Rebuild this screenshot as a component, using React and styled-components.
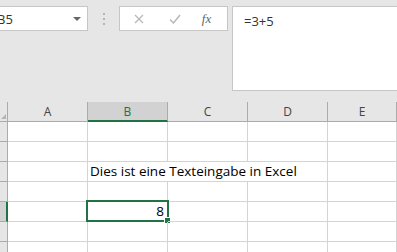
import React from "react";
import styled, { createGlobalStyle } from "styled-components";

const Global = createGlobalStyle`
  html, body { margin: 0; padding: 0; background: #e6e6e6; overflow: hidden; }
  body { width: 397px; height: 252px; }
`;

const Page = styled.div`
  width: 397px;
  height: 252px;
  overflow: hidden;
  background: #e6e6e6;
  font-family: "Open Sans", "Noto Sans", sans-serif;
`;

const FormulaBar = styled.div`
  display: flex;
  align-items: flex-start;
  height: 102px;
  padding-top: 6px;
  box-sizing: border-box;
`;

const NameBox = styled.div`
  flex: none;
  margin-left: -12px;
  width: 100px;
  height: 25px;
  box-sizing: border-box;
  background: #fff;
  border: 1px solid #c6c6c6;
  display: flex;
  align-items: center;
  justify-content: space-between;
  padding: 0 6px 0 8px;
  font-size: 13px;
  color: #333;
`;

const Arrow = styled.span`
  width: 0;
  height: 0;
  border-left: 4px solid transparent;
  border-right: 4px solid transparent;
  border-top: 4px solid #666;
  margin-top: 1px;
`;

const Grip = styled.div`
  flex: none;
  width: 31px;
  height: 25px;
  display: flex;
  flex-direction: column;
  align-items: center;
  justify-content: center;
  gap: 3px;
`;

const Dot = styled.span`
  width: 2px;
  height: 2px;
  background: #b4b4b4;
`;

const FxButtons = styled.div`
  flex: none;
  width: 109px;
  height: 25px;
  box-sizing: border-box;
  background: #fff;
  border: 1px solid #c6c6c6;
  display: grid;
  grid-template-columns: 37px 35px 1fr;
  align-items: center;
  justify-items: center;
`;

const Fx = styled.span`
  font-family: "Liberation Serif", serif;
  font-style: italic;
  font-size: 13px;
  color: #666;
  padding-right: 6px;
`;

const FormulaInput = styled.div`
  flex: 1;
  margin-left: 4px;
  margin-right: -4px;
  height: 85px;
  box-sizing: border-box;
  background: #fff;
  border: 1px solid #c6c6c6;
  padding: 5px 0 0 11px;
  font-size: 13px;
  color: #333;
`;

const Sheet = styled.div`
  display: grid;
  grid-template-columns: 8px 80px 80px 80px 80px 1fr;
  grid-auto-rows: 20px;
  background: #fff;
`;

const ColHead = styled.div`
  box-sizing: border-box;
  background: ${(p) => (p.$active ? "#d2d2d2" : "#e6e6e6")};
  border-right: 1px solid #ababab;
  border-bottom: ${(p) => (p.$active ? "2px solid #217346" : "1px solid #ababab")};
  display: flex;
  align-items: center;
  justify-content: center;
  font-size: 12px;
  color: ${(p) => (p.$active ? "#217346" : "#444")};
  padding-top: ${(p) => (p.$active ? "1px" : "0")};
`;

const Corner = styled.div`
  box-sizing: border-box;
  background: #e6e6e6;
  border-right: 1px solid #ababab;
  border-bottom: 1px solid #ababab;
  display: flex;
  align-items: flex-end;
  justify-content: flex-end;
  padding: 0 1px 2px 0;
`;

const CornerTri = styled.span`
  width: 0;
  height: 0;
  border-left: 5px solid transparent;
  border-bottom: 5px solid #b5b5b5;
`;

const RowHead = styled.div`
  box-sizing: border-box;
  background: ${(p) => (p.$active ? "#d2d2d2" : "#e6e6e6")};
  border-right: ${(p) => (p.$active ? "2px solid #217346" : "1px solid #ababab")};
  border-bottom: 1px solid #ababab;
`;

const Cell = styled.div`
  position: relative;
  box-sizing: border-box;
  border-right: 1px solid #d4d4d4;
  border-bottom: 1px solid #d4d4d4;
  grid-column: span ${(p) => p.$span || 1};
  display: flex;
  align-items: flex-end;
  justify-content: ${(p) => (p.$right ? "flex-end" : "flex-start")};
  padding: 0 3px 0 2px;
  font-family: "Open Sans", "Noto Sans", sans-serif;
  font-size: 13.5px;
  line-height: 19px;
  color: #000;
  white-space: nowrap;
`;

const Selection = styled.div`
  position: absolute;
  left: -2px;
  top: -2px;
  right: -2px;
  bottom: -1px;
  border: 2px solid #217346;
  pointer-events: none;
`;

const Handle = styled.span`
  position: absolute;
  right: -4px;
  bottom: -4px;
  width: 5px;
  height: 5px;
  background: #217346;
  border: 1px solid #fff;
  box-sizing: content-box;
`;

const cols = ["A", "B", "C", "D", "E"];

export default function App() {
  const rows = [1, 2, 3, 4, 5, 6, 7];
  return (
    <Page>
      <Global />
      <FormulaBar>
        <NameBox>
          <span>B5</span>
          <Arrow />
        </NameBox>
        <Grip>
          <Dot />
          <Dot />
          <Dot />
        </Grip>
        <FxButtons>
          <svg width="10" height="10" viewBox="0 0 10 10">
            <path d="M1 1 L9 9 M9 1 L1 9" stroke="#b8b8b8" strokeWidth="1.3" fill="none" />
          </svg>
          <svg width="12" height="10" viewBox="0 0 12 10">
            <path d="M1 5.5 L4.5 9 L11 1" stroke="#b8b8b8" strokeWidth="1.5" fill="none" />
          </svg>
          <Fx>fx</Fx>
        </FxButtons>
        <FormulaInput>=3+5</FormulaInput>
      </FormulaBar>
      <Sheet>
        <Corner>
          <CornerTri />
        </Corner>
        {cols.map((c) => (
          <ColHead key={c} $active={c === "B"}>
            {c}
          </ColHead>
        ))}
        {rows.map((r) => {
          if (r === 3) {
            return (
              <React.Fragment key={r}>
                <RowHead />
                <Cell />
                <Cell $span={3}>Dies ist eine Texteingabe in Excel</Cell>
                <Cell />
              </React.Fragment>
            );
          }
          return (
            <React.Fragment key={r}>
              <RowHead $active={r === 5} />
              {cols.map((c) =>
                r === 5 && c === "B" ? (
                  <Cell key={c} $right>
                    8
                    <Selection>
                      <Handle />
                    </Selection>
                  </Cell>
                ) : (
                  <Cell key={c} />
                )
              )}
            </React.Fragment>
          );
        })}
      </Sheet>
    </Page>
  );
}
